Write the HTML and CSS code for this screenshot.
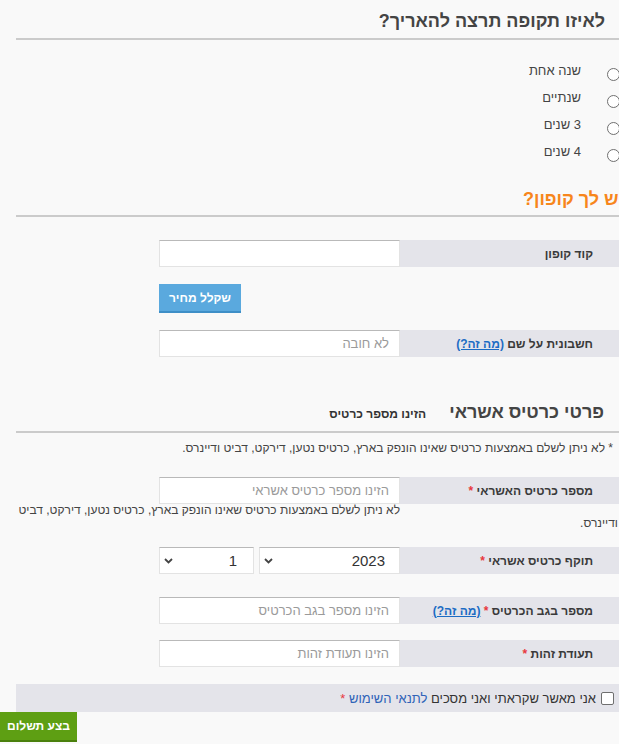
FILE: index.html
```html
<!DOCTYPE html>
<html lang="he">
<head>
<meta charset="utf-8">
<title>הארכת מנוי</title>
<link rel="stylesheet" href="styles.css">
</head>
<body>
<div class="page">
  <h2 class="title">לאיזו תקופה תרצה להאריך?</h2>
  <div class="radios">
    <label class="radio"><span class="circle"></span>שנה אחת</label>
    <label class="radio"><span class="circle"></span>שנתיים</label>
    <label class="radio"><span class="circle"></span>3 שנים</label>
    <label class="radio"><span class="circle"></span>4 שנים</label>
  </div>

  <h2 class="title title-coupon">יש לך קופון?</h2>
  <div class="row row-first">
    <div class="lbl">קוד קופון</div>
    <div class="field"></div>
  </div>
  <div class="btn-row">
    <button class="btn-blue">שקלל מחיר</button>
  </div>
  <div class="row row-invoice">
    <div class="lbl">חשבונית על שם&nbsp;<a class="help">(מה זה?)</a></div>
    <div class="field">לא חובה</div>
  </div>

  <div class="title title-card">
    <span class="card-head">פרטי כרטיס אשראי</span>
    <span class="card-sub">הזינו מספר כרטיס</span>
  </div>
  <p class="note">* לא ניתן לשלם באמצעות כרטיס שאינו הונפק בארץ, כרטיס נטען, דירקט, דביט ודיינרס.</p>
  <div class="row row-card">
    <div class="lbl">מספר כרטיס האשראי&nbsp;<span class="req">*</span></div>
    <div class="field">הזינו מספר כרטיס אשראי</div>
  </div>
  <div class="error"><span class="error-spacer"></span>לא ניתן לשלם באמצעות כרטיס שאינו הונפק בארץ, כרטיס נטען, דירקט, דביט ודיינרס.</div>
  <div class="row row-exp">
    <div class="lbl">תוקף כרטיס אשראי&nbsp;<span class="req">*</span></div>
    <div class="selects">
      <div class="select select-year"><span>2023</span><svg class="chev" width="9" height="6" viewBox="0 0 9 6"><path d="M1 1 L4.5 4.5 L8 1" fill="none" stroke="#444" stroke-width="1.8"/></svg></div>
      <div class="select select-month"><span>1</span><svg class="chev" width="9" height="6" viewBox="0 0 9 6"><path d="M1 1 L4.5 4.5 L8 1" fill="none" stroke="#444" stroke-width="1.8"/></svg></div>
    </div>
  </div>
  <div class="row row-cvv">
    <div class="lbl">מספר בגב הכרטיס&nbsp;<span class="req">*</span>&nbsp;<a class="help">(מה זה?)</a></div>
    <div class="field">הזינו מספר בגב הכרטיס</div>
  </div>
  <div class="row row-id">
    <div class="lbl">תעודת זהות&nbsp;<span class="req">*</span></div>
    <div class="field">הזינו תעודת זהות</div>
  </div>
  <div class="terms">
    <span class="check"></span>
    <span>אני מאשר שקראתי ואני מסכים <a class="terms-link">לתנאי השימוש</a> <span class="req">*</span></span>
  </div>
</div>
<div class="actions">
  <button class="btn-green">בצע תשלום</button>
</div>
</body>
</html>
```

FILE: styles.css
```css
html, body {
  margin: 0;
  padding: 0;
  overflow-x: hidden;
  background: #f9f9f9;
}
body {
  font-family: "Liberation Sans", Arial, sans-serif;
  color: #444;
}
.page {
  width: 620px;
  margin-left: 16px;
  direction: rtl;
}
.title {
  margin: 0;
  padding: 9px 31px 5px 0;
  font-size: 18px;
  line-height: 24px;
  font-weight: bold;
  color: #444;
  border-bottom: 2px solid #cbcbcb;
}
.radios {
  margin-top: 17px;
  padding-right: 16px;
}
.radio {
  display: flex;
  align-items: center;
  gap: 26px;
  height: 27px;
  font-size: 13px;
  color: #444;
}
.circle {
  width: 11px;
  height: 11px;
  margin-top: 8px;
  border: 1px solid #6f6f6f;
  border-radius: 50%;
  background: #fff;
  flex: none;
}
.title-coupon {
  margin-top: 22px;
  padding: 0 12px 4px 0;
  color: #f7861c;
}
.row {
  display: flex;
  height: 27px;
  margin-top: 17px;
}
.row-first { margin-top: 23px; }
.row-card { margin-top: 21px; }
.row-cvv { margin-top: 23px; }
.row-id { margin-top: 16px; }
.lbl {
  width: 236px;
  flex: none;
  box-sizing: border-box;
  padding-right: 43px;
  background: #e4e4ea;
  display: flex;
  align-items: center;
  font-size: 12px;
  font-weight: bold;
  color: #3a3a3a;
}
.field {
  width: 241px;
  flex: none;
  box-sizing: border-box;
  background: #fff;
  border: 1px solid #e3e3e3;
  border-top-color: #b9b9b9;
  padding-right: 10px;
  display: flex;
  align-items: center;
  font-size: 13px;
  color: #9a9a9a;
}
.help {
  color: #1c6cc4;
  text-decoration: underline;
  font-weight: bold;
}
.req {
  color: #e8383d;
}
.btn-row {
  display: flex;
  box-sizing: border-box;
  margin-top: 17px;
  padding-right: 236px;
  width: 477px;
  justify-content: flex-end;
}
.btn-blue {
  width: 82px;
  height: 29px;
  border: 0;
  border-bottom: 2px solid #3f8fc7;
  background: #5aa9de;
  color: #fff;
  font-family: inherit;
  font-weight: bold;
  font-size: 12px;
  padding: 0;
  cursor: pointer;
}
.title-card {
  margin-top: 43px;
  padding-top: 0;
  padding-right: 32px;
  display: flex;
  align-items: baseline;
}
.card-head {
  font-size: 18px;
}
.card-sub {
  font-size: 12px;
  margin-right: 23px;
  color: #333;
}
.note {
  margin: 7px 0 0;
  padding-right: 23px;
  font-size: 12px;
  line-height: 16px;
  color: #444;
}
.error {
  font-size: 12px;
  line-height: 13px;
  color: #444;
  padding-right: 18px;
}
.error-spacer {
  float: right;
  width: 218px;
  height: 13px;
}
.selects {
  display: flex;
  gap: 5px;
  width: 241px;
}
.select {
  box-sizing: border-box;
  height: 27px;
  background: #fff;
  border: 1px solid #e3e3e3;
  border-top-color: #b9b9b9;
  display: flex;
  align-items: center;
  justify-content: space-between;
  font-size: 15px;
  color: #333;
}
.select-year {
  width: 141px;
  padding: 0 14px 0 4px;
}
.select-month {
  width: 95px;
  padding: 0 16px 0 4px;
}
.chev {
  display: block;
}
.terms {
  margin-top: 17px;
  height: 28px;
  background: #e4e4ea;
  display: flex;
  align-items: center;
  gap: 5px;
  padding-right: 22px;
  font-size: 13px;
  color: #333;
}
.check {
  width: 11px;
  height: 11px;
  border: 1px solid #6f6f6f;
  border-radius: 2px;
  background: #fff;
  flex: none;
}
.terms-link {
  color: #2f63b8;
}
.actions {
  direction: ltr;
}
.btn-green {
  display: block;
  width: 77px;
  height: 30px;
  border: 0;
  border-bottom: 2px solid #4a800c;
  background: #5e9f13;
  color: #fff;
  font-family: inherit;
  font-weight: bold;
  font-size: 12px;
  padding: 0;
}
```
